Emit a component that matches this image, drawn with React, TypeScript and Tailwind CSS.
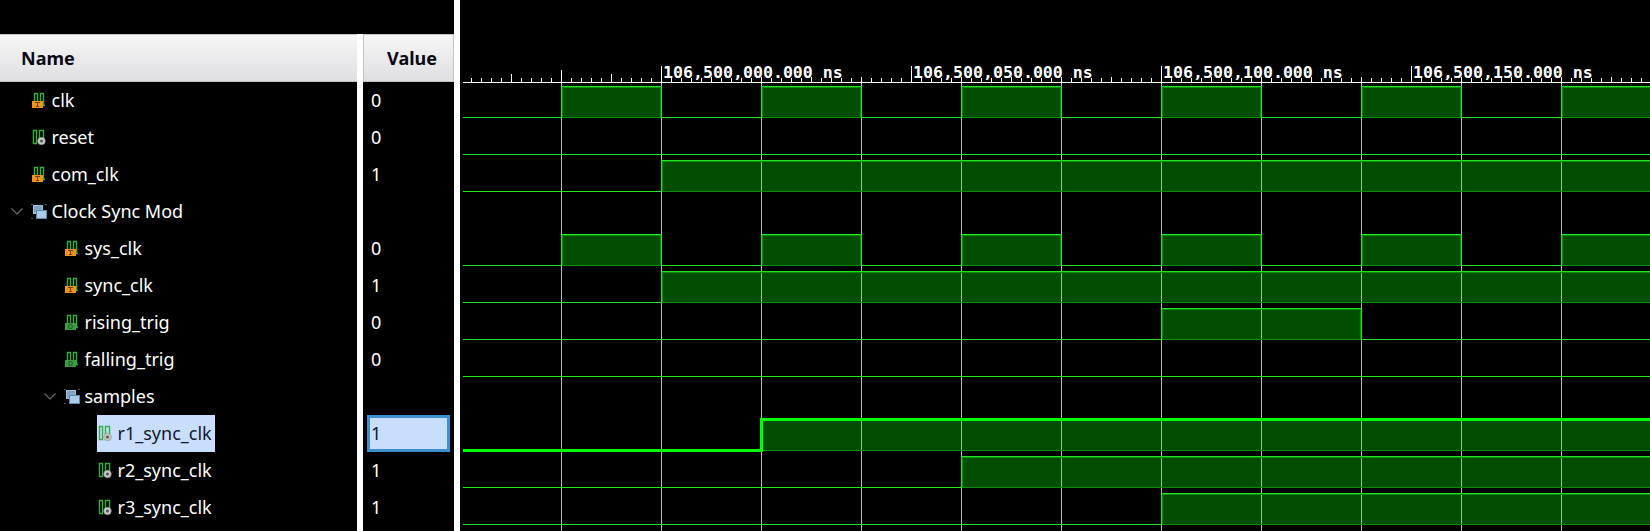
const clk = [[561, 661], [761, 861], [961, 1061], [1161, 1261], [1361, 1461], [1561, 1651]];

const waves = [
  { low: 117, pulses: clk },
  { low: 154, pulses: [] },
  { low: 191, pulses: [[661, 1651]] },
  { low: 265, pulses: clk },
  { low: 302, pulses: [[661, 1651]] },
  { low: 339, pulses: [[1161, 1361]] },
  { low: 376, pulses: [] },
  { low: 450, pulses: [[761, 1651]], selected: true },
  { low: 487, pulses: [[961, 1651]] },
  { low: 524, pulses: [[1161, 1651]] },
];

type Kind = "input" | "internal" | "reg" | "group";

const rows: { name: string; value: string; indent: string; kind: Kind; selected?: boolean }[] = [
  { name: "clk", value: "0", indent: "w-[32px]", kind: "input" },
  { name: "reset", value: "0", indent: "w-[32px]", kind: "reg" },
  { name: "com_clk", value: "1", indent: "w-[32px]", kind: "input" },
  { name: "Clock Sync Mod", value: "", indent: "w-[31px] pr-[8px]", kind: "group" },
  { name: "sys_clk", value: "0", indent: "w-[65px]", kind: "input" },
  { name: "sync_clk", value: "1", indent: "w-[65px]", kind: "input" },
  { name: "rising_trig", value: "0", indent: "w-[65px]", kind: "internal" },
  { name: "falling_trig", value: "0", indent: "w-[65px]", kind: "internal" },
  { name: "samples", value: "", indent: "w-[64px] pr-[8px]", kind: "group" },
  { name: "r1_sync_clk", value: "1", indent: "w-[97px]", kind: "reg", selected: true },
  { name: "r2_sync_clk", value: "1", indent: "w-[98px]", kind: "reg" },
  { name: "r3_sync_clk", value: "1", indent: "w-[98px]", kind: "reg" },
];

function SignalIcon({ kind }: { kind: Kind }) {
  if (kind === "group") {
    return (
      <svg width="17" height="17" viewBox="0 0 17 17" className="shrink-0">
        <path d="M0 1.5h2M14 1.5h2M0 15.5h2M14 15.5h2" stroke="#5a5a5a" fill="none" />
        <rect x="2.5" y="2.5" width="9" height="8" fill="#7ea6c8" stroke="#9cc2de" />
        <rect x="5.5" y="7.5" width="10" height="8" fill="#a9cde8" stroke="#5f86a6" />
      </svg>
    );
  }
  if (kind === "reg") {
    return (
      <svg width="16" height="17" viewBox="0 0 16 17" className="shrink-0">
        <path d="M1.5 15V1.5H4.5V14.5H1.5M7.5 9V1.5H11.5V9" stroke="#2fb040" strokeWidth="1.4" fill="none" />
        <circle cx="9.5" cy="12" r="3.8" fill="#c8c8c8" stroke="#8a8a8a" strokeWidth="0.6" />
        <circle cx="9.5" cy="12" r="1.6" fill="#5a5a5a" />
      </svg>
    );
  }
  const box = kind === "input" ? "#f0921e" : "#3f9a45";
  return (
    <svg width="16" height="17" viewBox="0 0 16 17" className="shrink-0">
      <path d="M2.5 9V1.5H5.5V9M8.5 9V1.5H11.5V13.5H13" stroke="#2fb040" strokeWidth="1.4" fill="none" />
      <rect x="0" y="9" width="11" height="7" fill={box} />
      {kind === "input" ? (
        <path d="M3 10.5h5M5.5 10.5v4M4 14.5h3" stroke="#6b4210" fill="none" />
      ) : (
        <ellipse cx="5.5" cy="12.5" rx="1.8" ry="2.3" stroke="#1d5a22" fill="none" />
      )}
    </svg>
  );
}

function Chevron() {
  return (
    <svg width="12" height="7" viewBox="0 0 12 7" className="ml-auto">
      <path d="M0.5 0.5L6 6L11.5 0.5" stroke="#6a6a6a" strokeWidth="1.2" fill="none" />
    </svg>
  );
}

function Ruler() {
  const ticks = [];
  for (let x = 471; x < 1650; x += 10) {
    let h = (x - 461) % 50 === 0 ? 5 : 4;
    if (x === 511 || x === 611) h = 8;
    if (x === 561) h = 12;
    ticks.push(<line key={x} x1={x + 0.5} x2={x + 0.5} y1={82 - h} y2={82} stroke="#fff" />);
  }
  return <>{ticks}</>;
}

function Waveform() {
  const grid = [561, 661, 761, 861, 961, 1061, 1161, 1261, 1361, 1461, 1561];
  const labels = [
    { x: 661, text: "106,500,000.000 ns" },
    { x: 911, text: "106,500,050.000 ns" },
    { x: 1161, text: "106,500,100.000 ns" },
    { x: 1411, text: "106,500,150.000 ns" },
  ];
  return (
    <svg width="1190" height="531" viewBox="460 0 1190 531" className="block">
      <Ruler />
      <line x1="463" x2="1650" y1="82.5" y2="82.5" stroke="#fff" />
      {labels.map((l) => (
        <g key={l.x}>
          <line x1={l.x + 0.5} x2={l.x + 0.5} y1="66" y2="82" stroke="#fff" />
          <text x={l.x + 2} y="78" fill="#fff" fontSize="16.6" fontWeight="bold" style={{ fontFamily: '"DejaVu Sans Mono", monospace' }}>
            {l.text}
          </text>
        </g>
      ))}
      {grid.map((x) => (
        <line key={x} x1={x + 0.5} x2={x + 0.5} y1="83" y2="531" stroke="#b8b8b8" />
      ))}
      {waves.map((w) =>
        w.pulses.map(([a, b]) => (
          <rect key={`${w.low}-${a}`} x={a + 1.5} y={w.low - 29.5} width={b - a - 2} height={30} fill="#0aff0a" fillOpacity="0.3" stroke="#0b8a0b" />
        )),
      )}
      {waves.map((w) => {
        const high = w.low - 31;
        let d = `M463 ${w.low + 0.5}`;
        w.pulses.forEach(([a, b]) => {
          d += `H${a + 0.5}V${high + 0.5}H${b + 0.5}`;
          if (b < 1650) d += `V${w.low + 0.5}`;
        });
        if (!w.pulses.length || w.pulses[w.pulses.length - 1][1] < 1650) d += "H1650";
        return <path key={w.low} d={d} stroke={w.selected ? "#00ff00" : "#1fe81f"} strokeWidth={w.selected ? 3 : 1} fill="none" />;
      })}
    </svg>
  );
}

export default function App() {
  return (
    <div className="flex h-[531px] w-[1650px] overflow-hidden bg-black text-[18px] text-white" style={{ fontFamily: '"Noto Sans", sans-serif' }}>
      <div className="flex w-[454px] shrink-0 flex-col">
        <div className="h-[34px] shrink-0" />
        <div className="flex flex-1">
          <div className="flex w-[357px] flex-col">
            <div className="flex h-[48px] items-center border-y border-[#c4c4c4] bg-gradient-to-b from-[#f6f6f6] to-[#dfdfe3] pl-[21px] font-bold text-[#0a0a14]">Name</div>
            {rows.map((r) => (
              <div key={r.name} className="flex h-[37px] items-center">
                <div className={`flex shrink-0 items-center ${r.indent}`}>{r.kind === "group" && <Chevron />}</div>
                <div className={`flex h-[37px] items-center gap-[3.5px] ${r.selected ? "bg-[#c9ddfd] pr-[3px] pl-[1px] text-[#10182a]" : ""}`}>
                  <SignalIcon kind={r.kind} />
                  <span>{r.name}</span>
                </div>
              </div>
            ))}
          </div>
          <div className="w-[6px] bg-white" />
          <div className="flex w-[91px] flex-col">
            <div className="flex h-[48px] items-center justify-end border border-[#c4c4c4] bg-gradient-to-b from-[#f6f6f6] to-[#dfdfe3] pr-[16px] font-bold text-[#0a0a14]">Value</div>
            {rows.map((r) => (
              <div key={r.name} className="flex h-[37px] items-center">
                {r.selected ? (
                  <div className="ml-[4px] flex h-[37px] w-[83px] items-center border-[3px] border-[#3d8fcd] bg-[#c9ddfd] pl-[1px] text-[#10182a]">{r.value}</div>
                ) : (
                  <span className="pl-[8px]">{r.value}</span>
                )}
              </div>
            ))}
          </div>
        </div>
      </div>
      <div className="w-[6px] shrink-0 bg-white" />
      <Waveform />
    </div>
  );
}
